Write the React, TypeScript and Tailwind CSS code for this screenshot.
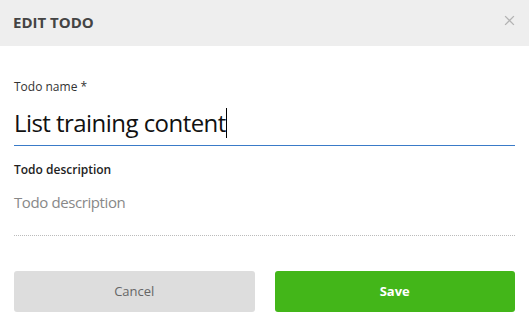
export default function App() {
  return (
    <div className="w-[529px] h-[320px] bg-white" style={{ fontFamily: '"Open Sans", "Noto Sans", sans-serif' }}>
      <div className="h-[46px] bg-[#eeeeee] flex items-start justify-between pl-[13px] pr-[14px]">
        <h2 className="mt-[12px] text-[15px] leading-[20px] font-bold text-[#444444]">EDIT TODO</h2>
        <svg className="mt-[15px] w-[11px] h-[11px]" viewBox="0 0 10 10" fill="none">
          <path d="M1 1l8 8M9 1l-8 8" stroke="#b3b3b3" strokeWidth="1.2" />
        </svg>
      </div>

      <div className="px-[14px] pt-[33px]">
        {/* todo name */}
        <label className="block text-[12px] text-[#333333] leading-[16px]">Todo name *</label>
        <div className="mt-[12px] border-b border-[#3a7bc8] h-[39px] flex items-start">
          <span className="text-[24px] text-[#111111] leading-[32px] tracking-[-0.55px]">List training content</span>
          <span className="mt-[1px] w-px h-[30px] bg-black" />
        </div>

        {/* todo description */}
        <label className="block mt-[16px] text-[12px] font-semibold text-[#222222] leading-[16px]">Todo description</label>
        <div className="mt-[14px] text-[15px] text-[#888888] leading-[20px] tracking-[-0.4px]">Todo description</div>
        <div className="mt-[23px] border-b border-dotted border-[#bbbbbb]" />

        <div className="mt-[35px] flex gap-[20px]">
          <button className="flex-1 h-[41px] rounded-[3px] bg-[#dddddd] text-[13px] text-[#666666]">Cancel</button>
          <button className="flex-1 h-[41px] rounded-[3px] bg-[#43b619] text-[13px] font-bold text-white">Save</button>
        </div>
      </div>
    </div>
  )
}
